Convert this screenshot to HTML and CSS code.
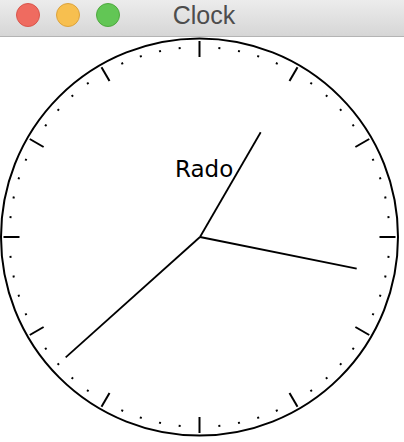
FILE: index.html
```html
<!DOCTYPE html>
<html>
<head>
<meta charset="utf-8">
<link rel="stylesheet" href="styles.css">
</head>
<body>
<div class="window">
  <div class="titlebar">
    <div class="lights">
      <span class="light red"></span>
      <span class="light yellow"></span>
      <span class="light green"></span>
    </div>
    <div class="title">Clock</div>
    <div></div>
  </div>
  <svg class="face" width="404" height="405" viewBox="0 37 404 405" xmlns="http://www.w3.org/2000/svg">
    <defs>
      <g id="seg">
        <line x1="199.5" y1="41" x2="199.5" y2="57" stroke="#000" stroke-width="2"/>
        <rect x="198.5" y="46" width="2" height="2" transform="rotate(6 199.5 237)"/>
        <rect x="198.5" y="46" width="2" height="2" transform="rotate(12 199.5 237)"/>
        <rect x="198.5" y="46" width="2" height="2" transform="rotate(18 199.5 237)"/>
        <rect x="198.5" y="46" width="2" height="2" transform="rotate(24 199.5 237)"/>
      </g>
    </defs>
    <circle cx="199.5" cy="237" r="198.5" fill="none" stroke="#000" stroke-width="2"/>
    <use href="#seg"/>
    <use href="#seg" transform="rotate(30 199.5 237)"/>
    <use href="#seg" transform="rotate(60 199.5 237)"/>
    <use href="#seg" transform="rotate(90 199.5 237)"/>
    <use href="#seg" transform="rotate(120 199.5 237)"/>
    <use href="#seg" transform="rotate(150 199.5 237)"/>
    <use href="#seg" transform="rotate(180 199.5 237)"/>
    <use href="#seg" transform="rotate(210 199.5 237)"/>
    <use href="#seg" transform="rotate(240 199.5 237)"/>
    <use href="#seg" transform="rotate(270 199.5 237)"/>
    <use href="#seg" transform="rotate(300 199.5 237)"/>
    <use href="#seg" transform="rotate(330 199.5 237)"/>
    <text class="brand" x="175" y="176.5">Rado</text>
    <line x1="200" y1="237" x2="260.7" y2="132.3" stroke="#000" stroke-width="1.8"/>
    <line x1="200" y1="237" x2="356.7" y2="268.7" stroke="#000" stroke-width="1.8"/>
    <line x1="200" y1="237" x2="65.7" y2="357.3" stroke="#000" stroke-width="1.8"/>
  </svg>
</div>
</body>
</html>
```
FILE: styles.css
```css
html, body {
  margin: 0;
  padding: 0;
  background: #ffffff;
}
.window {
  width: 404px;
  height: 442px;
  overflow: hidden;
  display: flex;
  flex-direction: column;
}
.titlebar {
  height: 36px;
  border-bottom: 1px solid #b4b4b4;
  background: linear-gradient(#ececec, #d6d6d6);
  display: grid;
  grid-template-columns: 1fr auto 1fr;
  align-items: start;
}
.lights {
  display: flex;
  gap: 16px;
  padding: 3px 0 0 16px;
}
.light {
  width: 22px;
  height: 22px;
  border-radius: 50%;
  border: 1px solid transparent;
}
.red { background: #ef6b60; border-color: #d9564c; }
.yellow { background: #f7bf4f; border-color: #dca33d; }
.green { background: #62c655; border-color: #4fa93f; }
.title {
  font-family: "Liberation Sans", Arial, sans-serif;
  font-size: 25px;
  line-height: 31px;
  color: #4d4d4d;
  padding-left: 4px;
}
.face {
  display: block;
}
.brand {
  font-family: "DejaVu Sans", sans-serif;
  font-size: 23px;
  fill: #000;
}
```
